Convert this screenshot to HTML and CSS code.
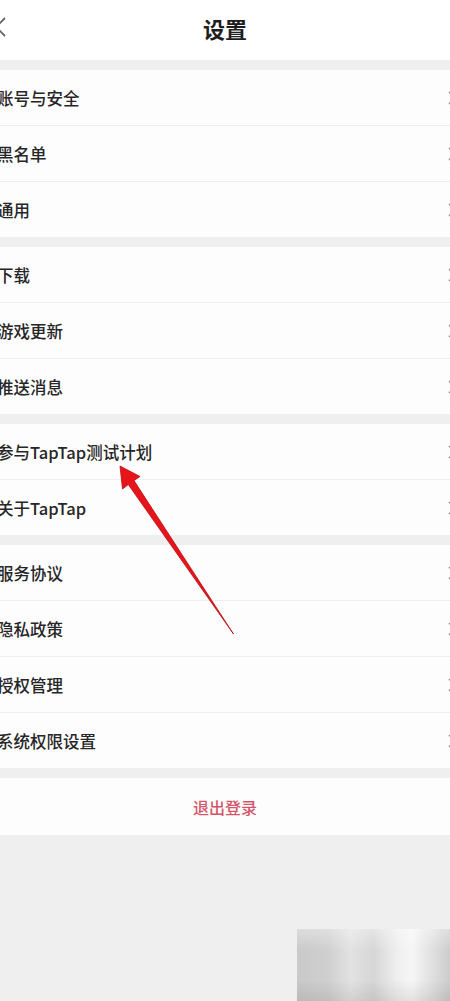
FILE: index.html
```html
<!DOCTYPE html>
<html lang="zh-CN">
<head>
    <meta charset="UTF-8">
    <meta name="viewport" content="width=device-width, initial-scale=1.0">
    <title>设置</title>
    <link rel="stylesheet" href="styles.css">
</head>
<body>
    <div class="page">
        <div class="header">
            <svg class="back" width="12" height="20" viewBox="0 0 12 20">
                <path d="M10 1 L1 10 L10 19" fill="none" stroke="#666" stroke-width="1.8"/>
            </svg>
            <h1>设置</h1>
        </div>

        <div class="group">
            <div class="row"><span>账号与安全</span><svg class="arrow" width="9" height="14" viewBox="0 0 9 14"><path d="M1 1 L7 7 L1 13" fill="none" stroke="#999" stroke-width="1.6"/></svg></div>
            <div class="row"><span>黑名单</span><svg class="arrow" width="9" height="14" viewBox="0 0 9 14"><path d="M1 1 L7 7 L1 13" fill="none" stroke="#999" stroke-width="1.6"/></svg></div>
            <div class="row"><span>通用</span><svg class="arrow" width="9" height="14" viewBox="0 0 9 14"><path d="M1 1 L7 7 L1 13" fill="none" stroke="#999" stroke-width="1.6"/></svg></div>
        </div>

        <div class="group">
            <div class="row"><span>下载</span><svg class="arrow" width="9" height="14" viewBox="0 0 9 14"><path d="M1 1 L7 7 L1 13" fill="none" stroke="#999" stroke-width="1.6"/></svg></div>
            <div class="row"><span>游戏更新</span><svg class="arrow" width="9" height="14" viewBox="0 0 9 14"><path d="M1 1 L7 7 L1 13" fill="none" stroke="#999" stroke-width="1.6"/></svg></div>
            <div class="row"><span>推送消息</span><svg class="arrow" width="9" height="14" viewBox="0 0 9 14"><path d="M1 1 L7 7 L1 13" fill="none" stroke="#999" stroke-width="1.6"/></svg></div>
        </div>

        <div class="group">
            <div class="row"><span>参与TapTap测试计划</span><svg class="arrow" width="9" height="14" viewBox="0 0 9 14"><path d="M1 1 L7 7 L1 13" fill="none" stroke="#999" stroke-width="1.6"/></svg></div>
            <div class="row"><span>关于TapTap</span><svg class="arrow" width="9" height="14" viewBox="0 0 9 14"><path d="M1 1 L7 7 L1 13" fill="none" stroke="#999" stroke-width="1.6"/></svg></div>
        </div>

        <div class="group">
            <div class="row"><span>服务协议</span><svg class="arrow" width="9" height="14" viewBox="0 0 9 14"><path d="M1 1 L7 7 L1 13" fill="none" stroke="#999" stroke-width="1.6"/></svg></div>
            <div class="row"><span>隐私政策</span><svg class="arrow" width="9" height="14" viewBox="0 0 9 14"><path d="M1 1 L7 7 L1 13" fill="none" stroke="#999" stroke-width="1.6"/></svg></div>
            <div class="row"><span>授权管理</span><svg class="arrow" width="9" height="14" viewBox="0 0 9 14"><path d="M1 1 L7 7 L1 13" fill="none" stroke="#999" stroke-width="1.6"/></svg></div>
            <div class="row"><span>系统权限设置</span><svg class="arrow" width="9" height="14" viewBox="0 0 9 14"><path d="M1 1 L7 7 L1 13" fill="none" stroke="#999" stroke-width="1.6"/></svg></div>
        </div>

        <div class="group">
            <div class="logout">退出登录</div>
        </div>

        <!-- red annotation arrow -->
        <svg class="pointer" width="450" height="700" viewBox="0 0 450 700">
            <polygon points="120,466 140,476.5 134,480.6 233.5,634 128.3,484.6 122.5,489" fill="#e8141b" stroke="#b80d12" stroke-width="0.8" stroke-linejoin="round"/>
        </svg>

        <div class="mosaic"></div>
    </div>
</body>
</html>
```

FILE: styles.css
```css
* {
    margin: 0;
    padding: 0;
    box-sizing: border-box;
}

body {
    font-family: "Noto Sans CJK SC", "Noto Sans", sans-serif;
    background: #efefef;
    overflow: hidden;
}

.page {
    position: relative;
    width: 450px;
    height: 1001px;
    overflow: hidden;
}

.header {
    position: relative;
    height: 60px;
    padding-bottom: 5px;
    background: #fff;
    display: flex;
    align-items: center;
    justify-content: center;
}

.header h1 {
    font-size: 22px;
    font-weight: 700;
    color: #1e1e1e;
}

.back {
    position: absolute;
    left: -5px;
    top: 17px;
}

.group {
    margin-top: 10px;
    background: #fdfdfd;
}

.row {
    height: 56px;
    margin: 0 -7px 0 -3px;
    display: flex;
    align-items: center;
    justify-content: space-between;
    border-bottom: 1px solid #eeeeee;
    font-size: 16.5px;
    font-weight: 500;
    color: #262626;
}

.row:last-child {
    border-bottom: none;
    height: 55px;
}

.logout {
    height: 57px;
    display: flex;
    align-items: center;
    justify-content: center;
    font-size: 16px;
    font-weight: 500;
    color: #d4566a;
}

.pointer {
    position: absolute;
    left: 0;
    top: 0;
}

.mosaic {
    position: absolute;
    left: 297px;
    top: 929px;
    width: 153px;
    height: 72px;
    background:
        linear-gradient(180deg, rgba(255,255,255,0.35) 0%, rgba(255,255,255,0) 30%, rgba(0,0,0,0) 70%, rgba(0,0,0,0.08) 100%),
        linear-gradient(90deg, #c9c9c9 0%, #cfcfcf 20%, #e2e2e2 35%, #d6d6d6 50%, #eeeeee 65%, #f6f6f6 75%, #dddddd 90%, #cccccc 100%);
}
```
